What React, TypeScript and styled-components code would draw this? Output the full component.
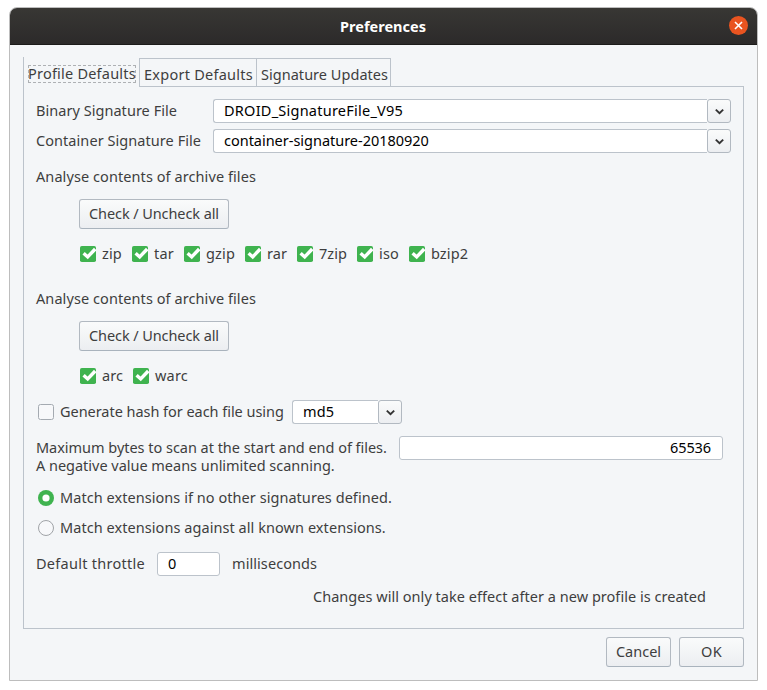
import React from 'react';
import styled, { createGlobalStyle, css } from 'styled-components';

const GlobalStyle = createGlobalStyle`
  *, *::before, *::after { box-sizing: border-box; }
  body { margin: 0; background: #fff; }
`;

const Page = styled.div`
  height: 690px;
  padding: 7px 9px 9px;
  font: 14.5px/18px "Noto Sans", sans-serif;
  color: #3e3e3e;
  white-space: pre;
`;

const Window = styled.main`
  width: 749px;
  height: 674px;
  border: 1px solid #bdbdbd;
  border-radius: 8px 8px 0 0;
  background: #f4f6f8;
  overflow: hidden;
`;

const TitleBar = styled.header`
  display: grid;
  grid-template-columns: 1fr auto 1fr;
  align-items: center;
  height: 37px;
  padding: 0 9px 0 8px;
  background: linear-gradient(#383734, #2c2a2a);
  border-bottom: 1px solid #1c1b1a;
`;

const Title = styled.h1`
  grid-column: 2;
  margin: 0 0 1px;
  font-size: 14.5px;
  font-weight: 700;
  line-height: 18px;
  color: #fff;
`;

const CloseButton = styled.button`
  justify-self: end;
  display: flex;
  width: 19px;
  height: 19px;
  margin-bottom: 1px;
  padding: 0;
  border: 0;
  border-radius: 50%;
  background: #e95420;
`;

const Text = styled.span<{ $track?: number }>`
  display: block;
  letter-spacing: ${(p) => p.$track ?? 0}px;
`;

const Tabs = styled.nav`
  display: flex;
  align-items: flex-end;
  height: 30px;
  margin: 12px 0 0 13px;
`;

const Tab = styled.div<{ $width: number; $active?: boolean }>`
  width: ${(p) => p.$width}px;
  flex: none;
  ${(p) =>
    p.$active
      ? css`
          height: 30px;
          padding: 8px 3px 0 4px;
          border-left: 1px solid #bcc3cb;
        `
      : css`
          height: 29px;
          padding: 6px 0 0 4px;
          border: 1px solid #bcc3cb;
          border-right-width: 0;
          &:last-of-type { border-right-width: 1px; }
        `}
`;

const FocusBox = styled.div`
  width: 108px;
  height: 18px;
  outline: 1px dashed #aeb1b4;
  outline-offset: -1px;
  line-height: 17px;
`;

const TabLine = styled.span`
  flex: 1;
  height: 1px;
  margin-right: 13px;
  background: #bcc3cb;
`;

const Panel = styled.section`
  width: 721px;
  height: 542px;
  margin-left: 13px;
  padding: 12px 12px 0;
  border: 1px solid #bcc3cb;
  border-top: 0;
`;

const Row = styled.div<{ $top?: number; $indent?: number }>`
  display: flex;
  align-items: center;
  height: 24px;
  margin-top: ${(p) => p.$top ?? 0}px;
  margin-left: ${(p) => p.$indent ?? 0}px;

  & > ${Text}, & > label > ${Text} {
    padding-bottom: 2px;
  }
`;

const ButtonRow = styled(Row)`
  height: 30px;
`;

const ScanRow = styled(Row)`
  align-items: flex-start;
  height: 39px;
`;

const NoteRow = styled(Row)`
  justify-content: flex-end;
  padding-right: 25px;
`;

const Caption = styled.label<{ $width: number }>`
  flex: none;
  width: ${(p) => p.$width}px;
`;

const ScanCaption = styled.div`
  flex: none;
  width: 363px;
  padding-top: 2px;
`;

const ThrottleField = styled.div`
  flex: none;
  width: 75px;
`;

const Input = styled.div<{ $width: number; $right?: boolean }>`
  flex: none;
  width: ${(p) => p.$width}px;
  height: 24px;
  padding: 1px ${(p) => (p.$right ? 11 : 10)}px 0;
  border: 1px solid #bcc3cb;
  border-radius: 3px;
  background: #fff;
  color: #000;
  text-align: ${(p) => (p.$right ? 'right' : 'left')};
`;

const ComboBox = styled.div`
  display: flex;
`;

const ComboInput = styled(Input)`
  border-right: 0;
  border-radius: 3px 0 0 3px;
`;

const ComboArrow = styled.button`
  display: flex;
  flex: none;
  width: 24px;
  height: 24px;
  padding: 0;
  border: 1px solid #b2b9c1;
  border-radius: 3px;
  background: linear-gradient(#fafbfb, #eceef1);
`;

const PushButton = styled.button<{ $width: number }>`
  width: ${(p) => p.$width}px;
  height: 30px;
  padding: 0 0 3px;
  border: 1px solid #b2b9c1;
  border-bottom-color: #a9b3bd;
  border-radius: 3px;
  background: linear-gradient(#fafbfb, #eceef1);
  font: inherit;
  color: inherit;
  white-space: pre;
`;

const Option = styled.label<{ $width?: number }>`
  display: flex;
  align-items: center;
  flex: none;
  gap: 6px;
  width: ${(p) => (p.$width ? `${p.$width}px` : 'auto')};
`;

const Mark = styled.svg`
  display: block;
  flex: none;
`;

const Footer = styled.footer`
  display: flex;
  justify-content: flex-end;
  gap: 8px;
  padding: 8px 13px 0 0;
`;

const CheckIcon = ({ checked = true }: { checked?: boolean }) => (
  <Mark width="16" height="16" viewBox="0 0 16 16">
    {checked ? (
      <>
        <rect width="16" height="16" rx="1.8" fill="#3fb34f" />
        <path d="M3.6 7.2 7.7 10.9 15.2 3" fill="none" stroke="#fff" strokeWidth="3.4" />
      </>
    ) : (
      <rect x=".5" y=".5" width="15" height="15" rx="2" fill="#f7f8fa" stroke="#a4aab1" />
    )}
  </Mark>
);

const RadioIcon = ({ checked = false }: { checked?: boolean }) => (
  <Mark width="16" height="16" viewBox="0 0 16 16">
    {checked ? (
      <>
        <circle cx="8" cy="8" r="8" fill="#3fb34f" />
        <circle cx="8" cy="8" r="3.6" fill="#fff" />
      </>
    ) : (
      <circle cx="8" cy="8" r="7.5" fill="#f7f8fa" stroke="#a0a3a7" />
    )}
  </Mark>
);

const Combo = ({ width, value, track }: { width: number; value: string; track: number }) => (
  <ComboBox>
    <ComboInput $width={width}>
      <Text $track={track}>{value}</Text>
    </ComboInput>
    <ComboArrow aria-label="Open list">
      <Mark width="22" height="22" viewBox="0 0 22 22">
        <path d="M7.8 9.6 11.5 13.1 15.2 9.6" fill="none" stroke="#333" strokeWidth="1.9" />
      </Mark>
    </ComboArrow>
  </ComboBox>
);

const archives: [string, number, number][] = [
  ['zip', 52, 0.15],
  ['tar', 52, 0.2],
  ['gzip', 61, 0.15],
  ['rar', 52, 0.05],
  ['7zip', 60, 0.05],
  ['iso', 52, 0.15],
  ['bzip2', 60, 0.1],
];
const webArchives: [string, number, number][] = [
  ['arc', 53, 0.07],
  ['warc', 60, 0.2],
];

const ArchiveGroup = ({ top, items }: { top: number; items: [string, number, number][] }) => (
  <>
    <Row $top={top}>
      <Text $track={0.08}>Analyse contents of archive files</Text>
    </Row>
    <ButtonRow $top={10} $indent={43}>
      <PushButton $width={150}>
        <Text $track={-0.09}>Check / Uncheck all</Text>
      </PushButton>
    </ButtonRow>
    <Row $top={13} $indent={44}>
      {items.map(([name, width, track]) => (
        <Option key={name} $width={width}>
          <CheckIcon />
          <Text $track={track}>{name}</Text>
        </Option>
      ))}
    </Row>
  </>
);

export default function App() {
  return (
    <Page>
      <GlobalStyle />
      <Window>
        <TitleBar>
          <Title>Preferences</Title>
          <CloseButton aria-label="Close">
            <Mark width="19" height="19" viewBox="0 0 19 19">
              <path d="m6 6 7 7m0-7-7 7" stroke="#fff" strokeWidth="1.6" />
            </Mark>
          </CloseButton>
        </TitleBar>
        <Tabs>
          <Tab $width={116} $active>
            <FocusBox>
              <Text $track={0.22}>Profile Defaults</Text>
            </FocusBox>
          </Tab>
          <Tab $width={117}>
            <Text $track={0.25}>Export Defaults</Text>
          </Tab>
          <Tab $width={135}>
            <Text $track={0.03}>Signature Updates</Text>
          </Tab>
          <TabLine />
        </Tabs>
        <Panel>
          <Row>
            <Caption $width={177}>
              <Text $track={0.04}>Binary Signature File</Text>
            </Caption>
            <Combo width={494} value="DROID_SignatureFile_V95" track={0.24} />
          </Row>
          <Row $top={6}>
            <Caption $width={177}>
              <Text $track={0.06}>Container Signature File</Text>
            </Caption>
            <Combo width={494} value="container-signature-20180920" track={-0.02} />
          </Row>
          <ArchiveGroup top={12} items={archives} />
          <ArchiveGroup top={21} items={webArchives} />
          <Row $top={12} $indent={2}>
            <Option $width={254}>
              <CheckIcon checked={false} />
              <Text $track={-0.04}>Generate hash for each file using</Text>
            </Option>
            <Combo width={86} value="md5" track={0.08} />
          </Row>
          <ScanRow $top={12}>
            <ScanCaption>
              <Text $track={-0.03}>Maximum bytes to scan at the start and end of files.</Text>
              <Text $track={-0.02}>A negative value means unlimited scanning.</Text>
            </ScanCaption>
            <Input $width={324} $right>
              <Text $track={-0.09}>65536</Text>
            </Input>
          </ScanRow>
          <Row $top={11} $indent={2}>
            <Option>
              <RadioIcon checked />
              <Text $track={0.05}>Match extensions if no other signatures defined.</Text>
            </Option>
          </Row>
          <Row $top={6} $indent={2}>
            <Option>
              <RadioIcon />
              <Text $track={0.06}>Match extensions against all known extensions.</Text>
            </Option>
          </Row>
          <Row $top={12}>
            <Caption $width={121}>
              <Text $track={0.27}>Default throttle</Text>
            </Caption>
            <ThrottleField>
              <Input $width={63}>
                <Text>0</Text>
              </Input>
            </ThrottleField>
            <Text $track={0.07}>milliseconds</Text>
          </Row>
          <NoteRow $top={9}>
            <Text $track={0.03}>Changes will only take effect after a new profile is created</Text>
          </NoteRow>
        </Panel>
        <Footer>
          <PushButton $width={65}>
            <Text>Cancel</Text>
          </PushButton>
          <PushButton $width={65}>
            <Text $track={0.3}>OK</Text>
          </PushButton>
        </Footer>
      </Window>
    </Page>
  );
}
